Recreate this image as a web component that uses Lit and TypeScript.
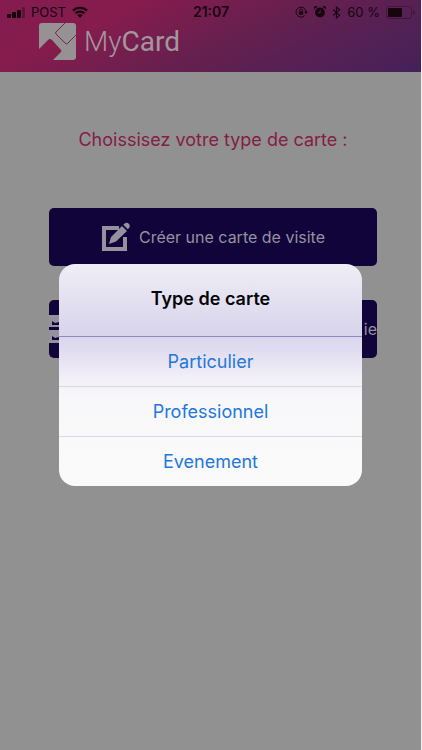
import { LitElement, html, css, svg } from "lit";
import { customElement, property } from "lit/decorators.js";

@customElement("status-bar")
class StatusBar extends LitElement {
  static styles = css`
    :host { display: grid; grid-template-columns: 1fr auto 1fr; align-items: center; height: 24px; padding: 0 6px 0 7px; color: #16050f; font: 13px/24px "Inter", sans-serif; }
    .side { display: flex; align-items: center; gap: 6px; }
    .right { justify-content: flex-end; }
    .time { font-size: 14px; font-weight: 600; }
    svg { display: block; flex: none; fill: currentColor; }
    .line { fill: none; stroke: currentColor; }
    .faint { opacity: 0.35; }
  `;
  render() {
    return html`
      <div class="side">
        <svg width="18" height="11" viewBox="0 0 18 11">
          <rect x="0" y="7" width="4" height="4" rx="1" /><rect x="5" y="5" width="4" height="6" rx="1" />
          <rect x="10" y="3" width="4" height="8" rx="1" /><rect class="faint" x="15" y="0" width="3" height="11" rx="1" />
        </svg>
        <span>POST</span>
        <svg width="16" height="12" viewBox="0 0 16 12">
          <path class="line" stroke-width="2.2" d="M1 4.6a10 10 0 0 1 14 0M3.6 7.4a6.3 6.3 0 0 1 8.8 0" /><path d="M5.3 9.2a3.9 3.9 0 0 1 5.4 0L8 12z" />
        </svg>
      </div>
      <span class="time">21:07</span>
      <div class="side right">
        <svg width="13" height="12" viewBox="0 0 13 12">
          <path class="line" d="M9.6 9.6A5 5 0 1 1 11 6" /><path d="M9 5.5h4L11 8z" />
          <path d="M3.8 5.5h4.4v3.2H3.8z" /><path class="line" d="M4.700 5.600V4.400a1.300 1.300 0 0 1 2.600 0v1.200" />
        </svg>
        <svg width="12" height="12" viewBox="0 0 12 12">
          <path fill-rule="evenodd" d="M6 1.600a4.900 4.900 0 1 1 0 9.800 4.900 4.900 0 0 1 0-9.800M5.700 3.500v2.800H3.800v.9h2.800V3.500z" />
          <path d="M.2 3.200A2 2 0 0 1 3.400.8zM11.800 3.200A2 2 0 0 0 8.600.8z" />
        </svg>
        <svg width="9" height="13" viewBox="0 0 9 13"><path class="line" stroke-width="1.1" d="M1 3.600l6.600 5.600L4.400 12V1l3.200 2.800L1 9.400" /></svg>
        <span>60 %</span>
        <svg width="29" height="13" viewBox="0 0 29 13">
          <rect class="line faint" x=".5" y=".5" width="25" height="12" rx="3" /><rect x="2" y="2" width="14" height="9" rx="1" />
          <path class="faint" d="M27 4.500a2 2 0 0 1 0 4z" />
        </svg>
      </div>`;
  }
}

@customElement("card-button")
class CardButton extends LitElement {
  static styles = css`
    :host { display: block; }
    button { display: flex; align-items: center; justify-content: center; gap: 8px; width: 100%; height: 58px; padding: 0; border: 0; border-radius: 5px; overflow: hidden; background: #10043b; color: #95929e; font: 16px/24px "Inter", sans-serif; }
    .spread { justify-content: space-between; }
    svg { display: block; flex: none; }
  `;
  @property({ type: Boolean }) spread = false;
  render() {
    return html`<button class=${this.spread ? "spread" : ""}><slot name="icon"></slot><slot></slot></button>`;
  }
}

const logo = svg`
  <path fill="#969294" d="M3 0h31q3 0 3 3v31q0 3-3 3H14l8-8q1-1 0-2L13 17q-2-2-4 0l-9 9V3q0-3 3-3z" />
  <path fill="none" stroke="#7e2050" stroke-width="1" d="M26 0L17 9q-1 1 0 2l9 9q2 2 3 0l8-8" />`;

@customElement("app-root")
class AppRoot extends LitElement {
  static styles = css`
    :host { display: block; position: relative; min-height: 100vh; box-sizing: border-box; border-right: 1px solid #f4f4f4; background: #919191; font-family: "Inter", sans-serif; }
    header { height: 72px; background: linear-gradient(155deg, #841c50 0%, #861c4d 25%, #65204f 55%, #44215a 100%); }
    .brand { display: flex; align-items: center; gap: 8px; height: 37px; padding-left: 39px; margin-top: -1px; color: #a3979f; font: 300 28px/36px "Roboto", sans-serif; }
    .brand b { font-weight: 400; }
    .brand svg { display: block; }
    main { display: flex; flex-direction: column; gap: 34px; padding: 56px 44px 0 49px; }
    h1 { margin: 0 0 22px; text-align: center; color: #851d45; font-size: 18px; font-weight: 400; line-height: 24px; }
    .overlay { position: absolute; inset: 0; display: flex; align-items: center; justify-content: center; }
    .dialog { width: 72%; border-radius: 16px; overflow: hidden; text-align: center; background: linear-gradient(#efeef5 0, #d8d4ec 70px, #e0dcf0 85px, #f2f0f7 115px, #f8f8fa 135px, #fafafa 100%); }
    h2 { margin: 0; padding: 23px 0 25px; color: #050507; font-size: 18px; font-weight: 600; line-height: 24px; }
    .choice { display: block; width: 100%; height: 50px; padding: 0; border: 0; border-top: 1px solid #dbd8e4; background: none; color: #2277de; font: 18px/24px "Inter", sans-serif; }
    h2 + .choice { border-top-color: #8f8bbd; }
  `;
  render() {
    return html`
      <header>
        <status-bar></status-bar>
        <div class="brand">
          <svg width="37" height="37" viewBox="0 0 37 37">${logo}</svg>
          <span>My<b>Card</b></span>
        </div>
      </header>
      <main>
        <h1>Choissisez votre type de carte :</h1>
        <card-button>
          <svg slot="icon" width="30" height="30" viewBox="0 0 30 30">
            <path fill="none" stroke="#95929e" stroke-width="4" d="M18 6H3v21h21V15" />
            <path fill="#95929e" d="M8 22l2-7L21 4l5 5L15 19.500zM22.300 2.800l1-1q2.500-2 4.500 0t0 4.500l-1 1z" />
          </svg>
          Créer une carte de visite
        </card-button>
        <card-button spread>
          <svg slot="icon" width="30" height="28" viewBox="0 0 30 28">
            <path fill="#95929e" d="M0 0h30v12H0zM0 15h30v13H0z" />
            <path fill="#10043b" d="M3 10V6l3 2 4-1v3zM3 25v-4l3 2 4-1v3z" />
          </svg>
          ie
        </card-button>
      </main>
      <div class="overlay">
        <section class="dialog" role="dialog" aria-label="Type de carte">
          <h2>Type de carte</h2>
          ${["Particulier", "Professionnel", "Evenement"].map((t) => html`<button class="choice">${t}</button>`)}
        </section>
      </div>`;
  }
}
